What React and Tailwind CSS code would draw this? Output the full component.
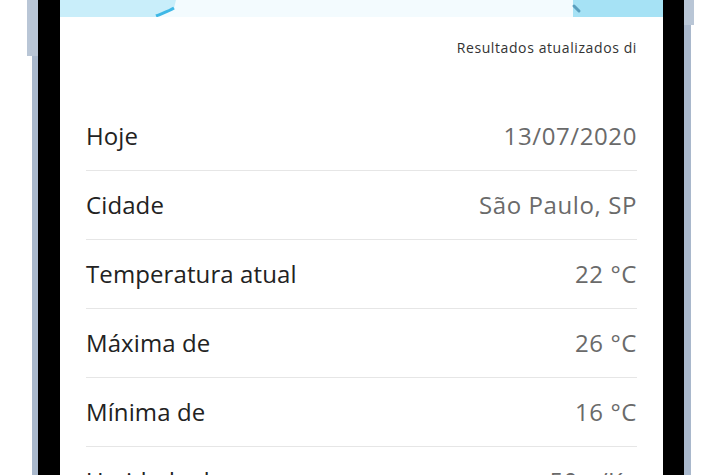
import React from "react";

const rows = [
  ["Hoje", "13/07/2020"],
  ["Cidade", "São Paulo, SP"],
  ["Temperatura atual", "22 °C"],
  ["Máxima de", "26 °C"],
  ["Mínima de", "16 °C"],
  ["Umidade do ar", "50 g/Kg"],
];

export default function App() {
  return (
    <div
      className="w-[720px] h-[475px] overflow-hidden bg-white flex"
      style={{ fontFamily: '"Open Sans", "Noto Sans", sans-serif' }}
    >
      {/* left frame */}
      <div className="w-[27px] shrink-0" />
      <div className="w-[11px] shrink-0 flex flex-col items-end">
        <div className="w-[11px] h-[56px] bg-[#b9c6d6]" />
        <div className="w-[6px] flex-1 bg-[#a9b8cc]" />
      </div>
      <div className="w-[22px] shrink-0 bg-black" />

      {/* screen */}
      <div className="w-[603px] shrink-0 flex flex-col bg-white">
        <div className="h-[17px] flex shrink-0">
          <div className="w-[98px] bg-[#c9eefa] relative">
            <svg className="absolute right-[-18px] top-0" width="22" height="17" viewBox="0 0 22 17">
              <path d="M0 17 C8 14 14 12 20 8 L22 0 L0 0 Z" fill="#c9eefa" />
              <path d="M2 16 C9 13 15 11 20 8" stroke="#3fb8e6" strokeWidth="3" fill="none" />
            </svg>
          </div>
          <div className="flex-1 bg-[#f3fbfe]" />
          <div className="w-[90px] bg-[#a6e2f5] relative">
            <svg className="absolute left-[-8px] top-0" width="18" height="17" viewBox="0 0 18 17">
              <path d="M9 6 L14 11" stroke="#5a9fbe" strokeWidth="3" fill="none" strokeLinecap="round" />
            </svg>
          </div>
        </div>

        <div className="px-[26px] flex flex-col">
          <div className="h-[85px] flex justify-end pt-[21px]">
            <span className="text-[14px] leading-[20px] tracking-[0.6px] text-[#333]">
              Resultados atualizados di
            </span>
          </div>
          {rows.map(([label, value]) => (
            <div
              key={label}
              className="h-[69px] shrink-0 flex items-center justify-between border-b border-[#e6e6e6]"
            >
              <span className="text-[24px] leading-[32px] tracking-[0.1px] text-[#222]">{label}</span>
              <span className="text-[24px] leading-[32px] tracking-[0.6px] text-[#6a6a6a]">{value}</span>
            </div>
          ))}
        </div>
      </div>

      {/* right frame */}
      <div className="w-[21px] shrink-0 bg-black" />
      <div className="w-[10px] shrink-0 flex flex-col">
        <div className="w-[10px] h-[25px] bg-[#b9c6d6]" />
        <div className="w-[7px] flex-1 bg-[#a9b8cc]" />
      </div>
    </div>
  );
}
